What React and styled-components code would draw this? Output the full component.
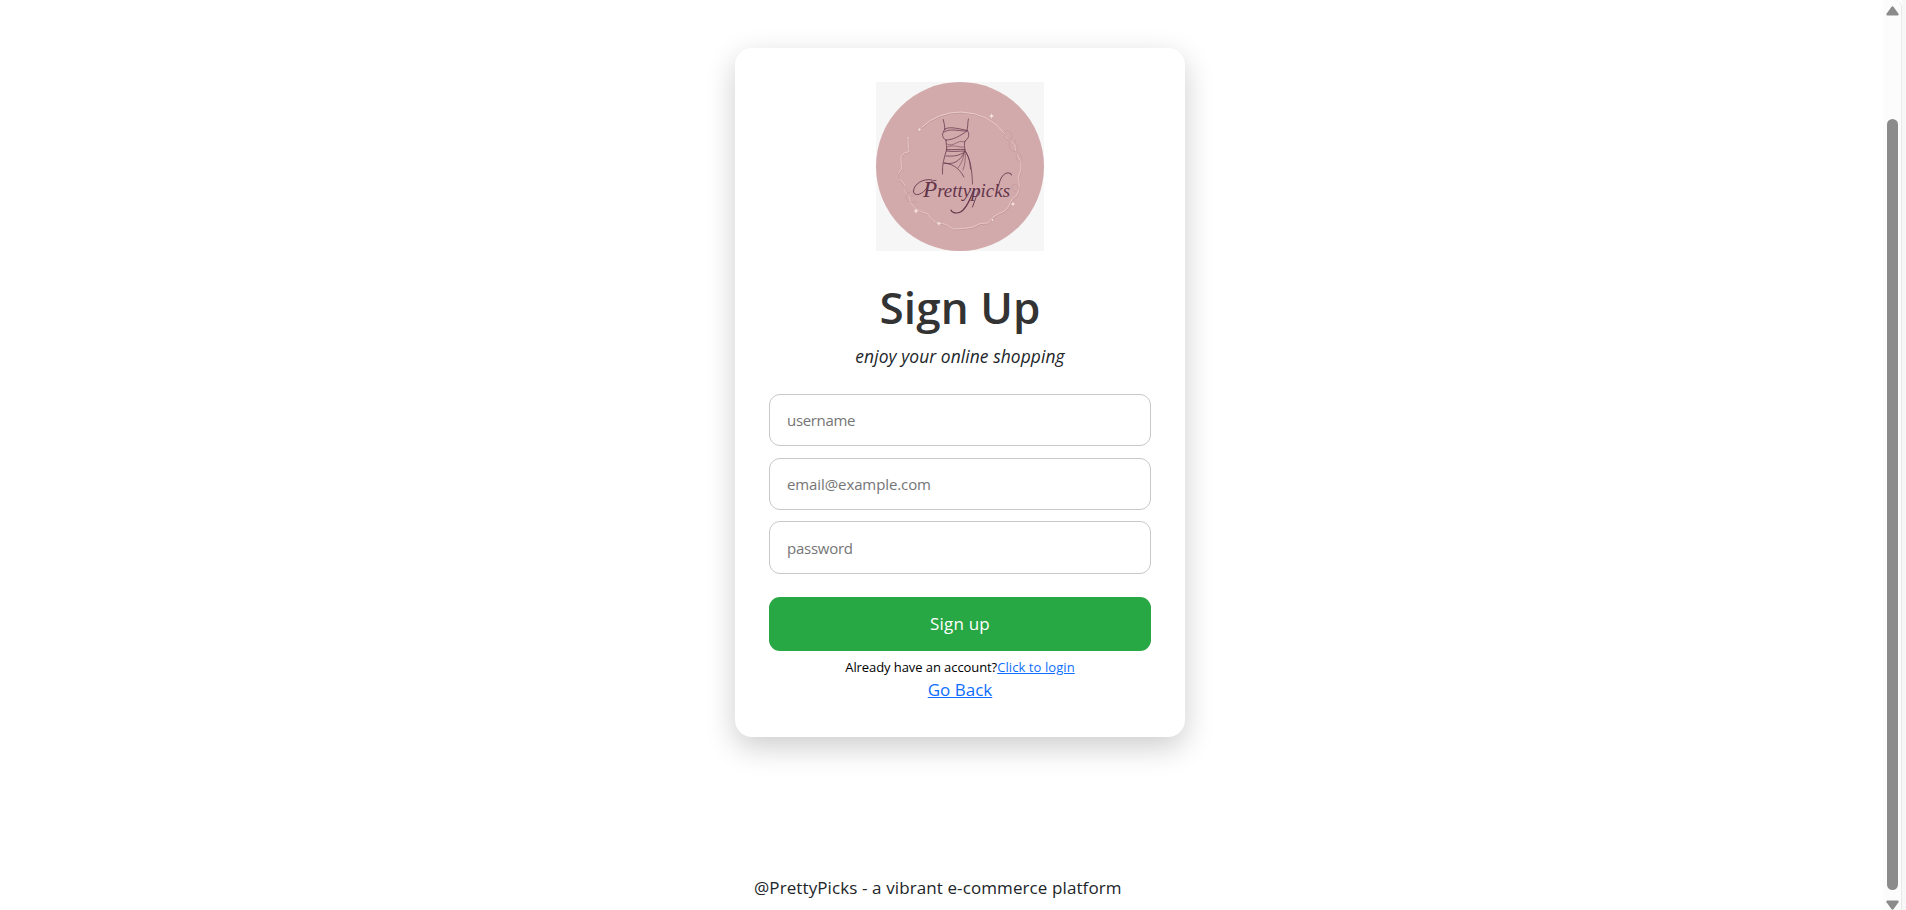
import React from "react";
import styled, { createGlobalStyle } from "styled-components";

const GlobalStyle = createGlobalStyle`
  *, *::before, *::after { box-sizing: border-box; }
  body {
    margin: 0;
    overflow: hidden;
    background: #fff;
    color: #212529;
    font-family: "Open Sans", "Noto Sans", sans-serif;
  }
`;

const Page = styled.div`
  display: flex;
  height: 910px;
`;

const Content = styled.main`
  flex: 1;
  display: flex;
  flex-direction: column;
  padding: 48px 0 0 735px;
`;

const Card = styled.section`
  width: 450px;
  height: 689px;
  padding: 34px;
  border-radius: 17px;
  background: #fff;
  box-shadow: 0 10px 30px rgba(0, 0, 0, 0.2);
  display: flex;
  flex-direction: column;
  align-items: center;
`;

const Logo = styled.svg`
  display: block;
  width: 168px;
  height: 169px;
  flex: none;
`;

const Title = styled.h1`
  margin: 29px 0 0;
  font-size: 44px;
  line-height: 54px;
  font-weight: 600;
  letter-spacing: 0.1px;
  color: #333;
`;

const Tagline = styled.p`
  margin: 9px 0 24px;
  font-size: 17.4px;
  line-height: 27px;
  font-style: italic;
  letter-spacing: 0.08px;
`;

const Form = styled.form`
  width: 100%;
  display: flex;
  flex-direction: column;
`;

const Field = styled.input`
  width: 100%;
  height: ${(p) => p.$height || 52}px;
  margin-bottom: ${(p) => p.$gap}px;
  padding: 0 17px;
  border: 1px solid #c8c8c8;
  border-radius: 11px;
  background: #fff;
  outline: none;
  font-family: inherit;
  font-size: 15px;
  letter-spacing: ${(p) => p.$tracking}px;
  &::placeholder { color: #757575; opacity: 1; }
`;

const SubmitButton = styled.button`
  height: 54px;
  padding: 0 0 1px;
  border: 0;
  border-radius: 11px;
  background: #28a745;
  color: #fff;
  font-family: inherit;
  font-size: 17px;
  letter-spacing: 0.2px;
`;

const LoginPrompt = styled.p`
  margin: 6px 0 0;
  font-size: 13px;
  line-height: 21px;
  letter-spacing: -0.08px;
  color: #000;
  white-space: nowrap;
`;

const Link = styled.a`
  color: #0d6efd;
  letter-spacing: 0.08px;
  text-decoration: underline;
`;

const BackLink = styled(Link)`
  font-size: 17px;
  line-height: 23px;
  letter-spacing: 0;
`;

const Footer = styled.footer`
  margin: 137px 0 0 19px;
  font-size: 17px;
  line-height: 27px;
  letter-spacing: 0.1px;
  white-space: nowrap;
`;

const ScrollTrack = styled.div`
  width: 19px;
  display: flex;
  flex-direction: column;
  align-items: center;
  padding: 6px 0 0 0;
  background: #fcfcfc;
  border-right: 1px solid #e9e9e9;
  border-top-right-radius: 7px;
`;

const ScrollArrow = styled.svg`
  display: block;
  width: 13px;
  height: 10px;
  fill: #8b8b8b;
`;

const ScrollThumb = styled.div`
  width: 11px;
  height: 771px;
  margin: 103px 0 10px;
  border-radius: 6px;
  background: #8b8b8b;
`;

const WindowEdge = styled.div`
  width: 4px;
  background: #f7f7f7;
`;

const sparkles = [
  [115.5, 34, 3.4], [43.5, 47.5, 2.4], [40, 129, 3.4], [63, 141.5, 3],
  [137, 122, 3], [116.5, 138, 2], [32, 56, 1.8],
];

const arc = "M46 45 Q62 30 85 30 Q113 31 129 52";

const vine =
  "M32 58 L33 70 Q27 70 25 75 Q25 83 26 87 Q19 93 22 98 Q29 99 29 106 Q29 112 34 114 Q33 122 40 127 Q47 131 52 132 Q56 140 63 141 Q70 141 77 147 Q88 147 97 145 Q104 140 112 141 Q117 134 122 132 Q132 129 134 121 Q136 116 141 113 Q145 104 142 96 Q146 88 145 80 Q139 70 139 63 Q131 56 127 53";

function BrandLogo() {
  return (
    <Logo viewBox="0 0 168 169" role="img" aria-label="Prettypicks">
      <rect width="168" height="169" fill="#f6f6f6" />
      <ellipse cx="84" cy="84.5" rx="84" ry="84.5" fill="#d3aaab" />
      <g fill="none" strokeLinecap="round" strokeLinejoin="round">
        <g transform="translate(.5 .9)" stroke="#bd9094" strokeWidth=".7">
          <path d={arc} />
          <path d={vine} />
        </g>
        <g stroke="#ecd0ce" strokeWidth=".9">
          <path d={arc} />
          <path d={vine} opacity=".85" />
        </g>
        <g stroke="#c4999c" strokeWidth=".7">
          <path d="M128 53 C126 47 136 47 136 54 C136 60 128 58 128 53 M135 57 C130 65 136 72 141 69 C145 66 137 61 139 58" />
          <path d="M141 70 C138 76 143 82 145 79 C148 75 143 73 142 71 M136 106 C133 101 144 101 142 107 C140 112 137 109 136 106" />
          <path d="M22 90 C18 98 27 100 29 106 C31 113 38 118 38 112 C37 107 29 111 30 117 C33 122 39 118 41 121" />
        </g>
      </g>
      {sparkles.map(([x, y, r]) => (
        <path
          key={x}
          d={`M${x} ${y - r} L${x + r * 0.3} ${y - r * 0.3} L${x + r} ${y} L${x + r * 0.3} ${y + r * 0.3} L${x} ${y + r} L${x - r * 0.3} ${y + r * 0.3} L${x - r} ${y} L${x - r * 0.3} ${y - r * 0.3}Z`}
          fill="#f4dfdc"
          stroke="#bb8f92"
          strokeWidth=".3"
        />
      ))}
      <g fill="none" stroke="#6b3b50" strokeWidth=".8" strokeLinecap="round">
        <path d="M67.2 37.5 C68 41 69 44 68.7 47.5 M92.4 37 C91.5 41 92 45 91 49" />
        <path d="M69 47 C74 44 83 47 91.5 48.5 C94 53 92.5 57 89 59 M69 47 C65.5 52 65.5 55 70 58.5" />
        <path d="M70 58 C77 58 84 54 91 49 M68 50 C75 46 80 49 90 49" />
        <path d="M70 58 C70 63 71 64 70.5 68 C68 76 66 83 66.5 92 M89 59 C88 62 88.5 65 89 68" />
        <path d="M71 62 C77 66 82 57 88 60 M71 65 C78 62 83 66 88 65" strokeWidth=".55" />
        <path d="M70.5 67.5 C77 68 83 67 89 67.5 M70.5 69 C77 70 83 69 89 69" />
        <path d="M89 69 C94 76 96 86 96.5 102 M89 69 C93 74 94 80 94.5 87" />
        <path d="M89 69 C90 76 89 82 87 88 M88 70 C88 76 85 82 82 86" strokeWidth=".55" />
        <path d="M89 69 C84 80 77 83 68 81 M87 71 C80 75 75 74 70 74 M68 81 C75 82 82 84 88 95" />
      </g>
      <text
        x="47"
        y="114.5"
        fontFamily='"Liberation Serif", serif'
        fontStyle="italic"
        fontSize="19.5"
        textLength="87"
        lengthAdjust="spacingAndGlyphs"
        fill="#63364b"
      >
        <tspan fontSize="24">P</tspan>rettypicks
      </text>
      <g fill="none" stroke="#63364b" strokeWidth=".9" strokeLinecap="round">
        <path d="M56 98 C47 96 38 102 37.5 109 C38 116 48 112 52 104 C54 100 57 98 60 98.5" />
        <path d="M122.5 104 C124 96 128 90 133 91 Q136 91.5 135.5 93" />
        <path d="M98 107 C93 121 88 131 81 131 Q76 131 75 128" strokeWidth="1.1" />
        <path d="M103 107 L96.5 125" />
      </g>
    </Logo>
  );
}

export default function App() {
  return (
    <>
      <GlobalStyle />
      <Page>
        <Content>
          <Card>
            <BrandLogo />
            <Title>Sign Up</Title>
            <Tagline>enjoy your online shopping</Tagline>
            <Form>
              <Field type="text" placeholder="username" $gap={12} $tracking={-0.32} />
              <Field type="email" placeholder="email@example.com" $gap={11} $tracking={-0.1} />
              <Field type="password" placeholder="password" $height={53} $gap={23} $tracking={-0.25} />
              <SubmitButton type="button">Sign up</SubmitButton>
            </Form>
            <LoginPrompt>
              Already have an account?<Link href="#login">Click to login</Link>
            </LoginPrompt>
            <BackLink href="#back">Go Back</BackLink>
          </Card>
          <Footer>@PrettyPicks - a vibrant e-commerce platform</Footer>
        </Content>
        <ScrollTrack>
          <ScrollArrow viewBox="0 0 13 10">
            <path d="M5.2 1.2 Q6.5 -.6 7.8 1.2 L12.5 7.8 Q13.2 9.4 11.5 9.5 H1.5 Q-.2 9.4 .5 7.8Z" />
          </ScrollArrow>
          <ScrollThumb />
          <ScrollArrow viewBox="0 0 13 10">
            <path d="M5.2 8.8 Q6.5 10.6 7.8 8.8 L12.5 2.2 Q13.2 .6 11.5 .5 H1.5 Q-.2 .6 .5 2.2Z" />
          </ScrollArrow>
        </ScrollTrack>
        <WindowEdge />
      </Page>
    </>
  );
}
